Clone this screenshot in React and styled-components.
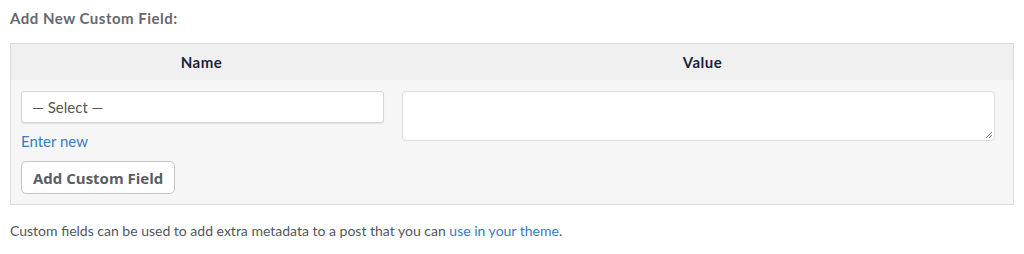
import React from 'react'
import styled, { createGlobalStyle } from 'styled-components'

const GlobalStyle = createGlobalStyle`
  body {
    margin: 0;
    background: #fff;
    font-family: Lato, "Open Sans", sans-serif;
  }
`

const Page = styled.div`
  padding: 9px 10px 0 10px;
`

const Heading = styled.p`
  margin: 0 0 16px 0;
  font-size: 15px;
  letter-spacing: 0.5px;
  font-weight: 700;
  color: #646970;
  line-height: 18px;
`

const MetaTable = styled.div`
  border: 1px solid #dcdcde;
  background: #f5f6f5;
  width: 1004px;
  box-sizing: border-box;
`

const HeadRow = styled.div`
  display: grid;
  grid-template-columns: 381px 1fr;
  background: #f0f0f0;
  height: 36px;
  align-items: center;
`

const HeadCell = styled.div`
  text-align: center;
  font-size: 15px;
  letter-spacing: 0.5px;
  font-weight: 700;
  color: #1d1f3d;
`

const BodyRow = styled.div`
  display: grid;
  grid-template-columns: 381px 1fr;
  padding: 11px 0 10px 0;
`

const Cell = styled.div`
  display: flex;
  flex-direction: column;
  align-items: flex-start;
  padding: 0 ${p => p.$right || 8}px 0 10px;
`

const Select = styled.div`
  width: 100%;
  height: 32px;
  box-sizing: border-box;
  background: #fff;
  border: 1px solid #d6d6d6;
  border-radius: 3px;
  box-shadow: 0 1px 1px rgba(0, 0, 0, 0.08);
  padding: 0 10px;
  display: flex;
  align-items: center;
  font-size: 15px;
  color: #555;
`

const EnterNew = styled.a`
  margin-top: 9px;
  font-size: 15px;
  line-height: 18px;
  color: #3a7bbd;
  text-decoration: none;
`

const Button = styled.button`
  margin-top: 11px;
  height: 33px;
  padding: 0 11px;
  background: #fff;
  border: 1px solid #c3c4c7;
  border-radius: 5px;
  font-family: "Open Sans", Lato, sans-serif;
  font-size: 15px;
  font-weight: 700;
  color: #5a5d63;
`

const TextArea = styled.div`
  position: relative;
  width: 100%;
  height: 50px;
  box-sizing: border-box;
  background: #fff;
  border: 1px solid #dcdcde;
  border-radius: 4px;
`

const Grip = styled.svg`
  position: absolute;
  right: 1px;
  bottom: 1px;
`

const Note = styled.p`
  margin: 17px 0 0 0;
  font-size: 14px;
  line-height: 18px;
  color: #50575e;
`

const NoteLink = styled.a`
  color: #3a7bbd;
  text-decoration: none;
`

export default function App() {
  return (
    <Page>
      <GlobalStyle />
      <Heading>Add New Custom Field:</Heading>
      <MetaTable>
        <HeadRow>
          <HeadCell>Name</HeadCell>
          <HeadCell>Value</HeadCell>
        </HeadRow>
        <BodyRow>
          <Cell>
            <Select>— Select —</Select>
            <EnterNew href="#">Enter new</EnterNew>
            <Button>Add Custom Field</Button>
          </Cell>
          <Cell $right={18}>
            <TextArea>
              <Grip width="8" height="8" viewBox="0 0 8 8">
                <path d="M1 7 L7 1 M4 7 L7 4" stroke="#777" strokeWidth="1" />
              </Grip>
            </TextArea>
          </Cell>
        </BodyRow>
      </MetaTable>
      <Note>
        Custom fields can be used to add extra metadata to a post that you can{' '}
        <NoteLink href="#">use in your theme</NoteLink>.
      </Note>
    </Page>
  )
}
